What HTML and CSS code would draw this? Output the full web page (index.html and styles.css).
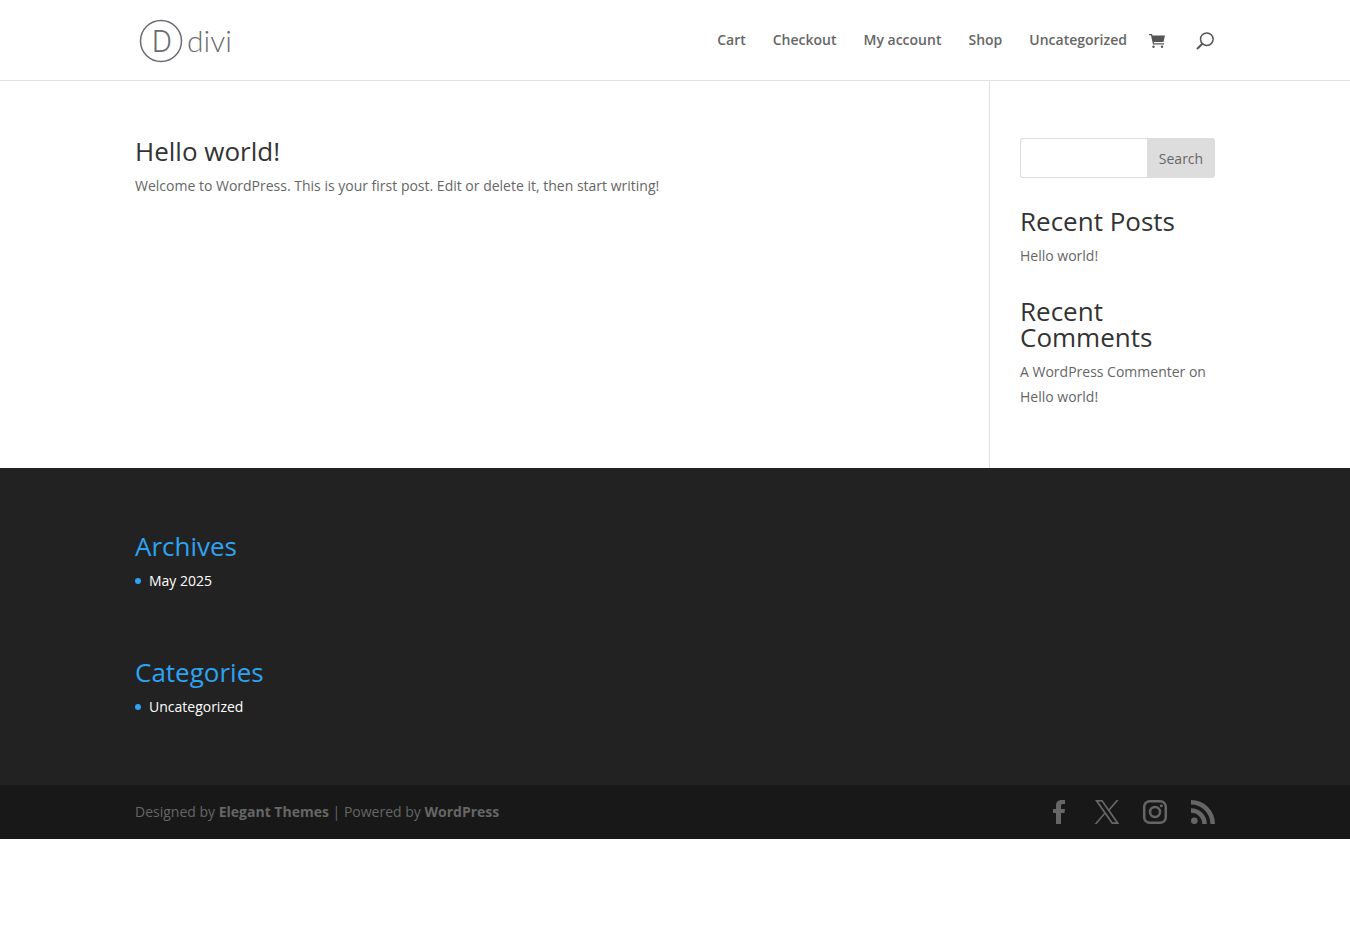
FILE: index.html
```
<!DOCTYPE html>
<html lang="en">
  <head>
    <meta charset="UTF-8" />
    <title>Hello world!</title>
    <meta name="viewport" content="width=device-width, initial-scale=1" />
    <link rel="stylesheet" href="styles.css">
  </head>
  <body>
    <header class="main-header">
      <div class="container header-inner">
        <a href="#" class="logo" aria-label="divi">
          <svg width="100" height="50" viewBox="0 0 100 50">
            <circle cx="26" cy="26" r="20.5" />
            <text class="logo-letter" x="27" y="37" text-anchor="middle">D</text>
            <text class="logo-name" x="52" y="37">divi</text>
          </svg>
        </a>
        <nav class="top-menu">
          <a href="#">Cart</a>
          <a href="#">Checkout</a>
          <a href="#">My account</a>
          <a href="#">Shop</a>
          <a href="#">Uncategorized</a>
        </nav>
        <div class="header-icons">
          <a href="#" aria-label="Cart">
            <svg width="16" height="14" viewBox="0 0 16 14">
              <path d="M0 0h3l.5 1.5H16L14.500 8H4.800l.3 1.200H15v1.300H4L2 1.200H0z" />
              <circle cx="4.500" cy="12.800" r="1.200" />
              <circle cx="13" cy="12.800" r="1.200" />
            </svg>
          </a>
          <button class="search-icon" aria-label="Open search">
            <svg width="18" height="18" viewBox="0 0 18 18">
              <circle cx="10.800" cy="7.200" r="6.300" />
              <path d="M6.300 11.700L1 17" />
            </svg>
          </button>
        </div>
      </div>
    </header>

    <main class="container content">
      <article class="post">
        <h2><a href="#">Hello world!</a></h2>
        <p>Welcome to WordPress. This is your first post. Edit or delete it, then start writing!</p>
      </article>
      <aside class="sidebar">
        <form class="search-form">
          <input type="text" aria-label="Search" />
          <button type="button">Search</button>
        </form>
        <section class="widget">
          <h2>Recent Posts</h2>
          <ul>
            <li><a href="#">Hello world!</a></li>
          </ul>
        </section>
        <section class="widget">
          <h2>Recent Comments</h2>
          <ul>
            <li><a href="#">A WordPress Commenter</a> on <a href="#">Hello world!</a></li>
          </ul>
        </section>
      </aside>
    </main>

    <footer class="main-footer">
      <div class="container footer-widgets">
        <section class="footer-widget">
          <h2>Archives</h2>
          <ul>
            <li><a href="#">May 2025</a></li>
          </ul>
        </section>
        <section class="footer-widget">
          <h2>Categories</h2>
          <ul>
            <li><a href="#">Uncategorized</a></li>
          </ul>
        </section>
      </div>
      <div class="footer-bottom">
        <div class="container footer-bottom-inner">
          <p>Designed by <a href="#">Elegant Themes</a> | Powered by <a href="#">WordPress</a></p>
          <div class="social-icons">
            <a href="#" aria-label="Facebook">
              <svg width="24" height="24" viewBox="0 0 24 24">
                <path d="M9 24V13H6V9h3V6c0-4 2-6 5.500-6H18v4h-2.500C14.300 4 14 4.700 14 6v3h4l-.5 4H14v11z" />
              </svg>
            </a>
            <a href="#" aria-label="X">
              <svg width="24" height="24" viewBox="0 0 24 24">
                <path fill-rule="evenodd" d="M0 0h7.500l6.300 9L21.500 0h2.200l-8.900 10.200L24.300 24h-7.500l-6.900-9.700L1.800 24H-.4L9 13.100zM3.300 1.700l14.400 20.600h3.300L6.700 1.700z" />
              </svg>
            </a>
            <a href="#" aria-label="Instagram">
              <svg class="outline" width="24" height="24" viewBox="0 0 24 24">
                <rect x="1.200" y="1.200" width="21.600" height="21.600" rx="5.500" />
                <circle cx="12" cy="12" r="5" />
                <circle class="dot" cx="18.300" cy="5.700" r="1.500" />
              </svg>
            </a>
            <a href="#" aria-label="RSS">
              <svg width="24" height="24" viewBox="0 0 24 24">
                <circle cx="3.300" cy="20.700" r="3.300" />
                <path d="M0 8.200v4.600A11.200 11.200 0 0 1 11.200 24h4.600A15.800 15.800 0 0 0 0 8.200z" />
                <path d="M0 0v4.600A19.400 19.400 0 0 1 19.400 24H24A24 24 0 0 0 0 0z" />
              </svg>
            </a>
          </div>
        </div>
      </div>
    </footer>
  </body>
</html>
```
FILE: styles.css
```
* {
  box-sizing: border-box;
}
body {
  margin: 0;
  font-family: "Open Sans", Arial, sans-serif;
  font-size: 14px;
  line-height: 25px;
  color: #666;
  background-color: #fff;
}
a {
  color: inherit;
  text-decoration: none;
}
h2 {
  margin: 0;
  padding-bottom: 9px;
  font-size: 26px;
  font-weight: 500;
  line-height: 26px;
  color: #333;
}
p {
  margin: 0;
}
ul {
  list-style: none;
  margin: 0;
  padding: 0;
}
svg {
  display: block;
}
.container {
  width: 80%;
  max-width: 1080px;
  margin: 0 auto;
}

/* Header */
.main-header {
  border-bottom: 1px solid #e2e2e2;
}
.header-inner {
  display: flex;
  align-items: center;
  height: 80px;
}
.logo {
  margin-right: auto;
}
.logo circle {
  fill: none;
  stroke: #6b6b70;
  stroke-width: 1.5px;
}
.logo text {
  font-weight: 300;
  fill: #6b6b70;
}
.logo-letter {
  font-family: Roboto, sans-serif;
  font-size: 31px;
}
.logo-name {
  font-family: Lato, sans-serif;
  font-size: 30px;
}
.top-menu {
  display: flex;
  gap: 27px;
  padding-bottom: 2px;
  font-weight: 600;
}
.header-icons {
  display: flex;
  align-items: center;
  gap: 31px;
  padding: 2px 1px 0 22px;
}
.header-icons svg {
  fill: #555;
}
.search-icon {
  padding: 0;
  border: 0;
  background: none;
  cursor: pointer;
}
.search-icon svg {
  fill: none;
  stroke: #555;
  stroke-width: 1.5px;
}
.search-icon path {
  stroke-width: 2px;
}

/* Content */
.content {
  display: flex;
}
.post {
  flex: 1;
  padding-top: 57px;
}
.sidebar {
  width: 226px;
  padding: 57px 0 59px 30px;
  border-left: 1px solid #e2e2e2;
}
.search-form {
  display: flex;
  height: 40px;
  margin-bottom: 30px;
}
.search-form input {
  flex: 1;
  min-width: 0;
  padding: 0 10px;
  font: inherit;
  border: 1px solid #ddd;
  border-right: 0;
  border-radius: 3px 0 0 3px;
}
.search-form button {
  width: 68px;
  padding: 0;
  font: inherit;
  color: #666;
  background-color: #ddd;
  border: 0;
  border-radius: 0 3px 3px 0;
}
.widget + .widget {
  margin-top: 30px;
}

/* Footer */
.main-footer {
  background-color: #222;
}
.footer-widgets {
  padding: 65px 0 66px;
}
.footer-widget + .footer-widget {
  margin-top: 66px;
}
.footer-widget h2 {
  color: #2ea3f2;
}
.footer-widget li {
  display: flex;
  align-items: center;
  gap: 8px;
  color: #fff;
}
.footer-widget li::before {
  content: "";
  width: 6px;
  height: 6px;
  border-radius: 3px;
  background-color: #2ea3f2;
}
.footer-bottom {
  padding: 14px 0 15px;
  background-color: #181818;
}
.footer-bottom-inner {
  display: flex;
  justify-content: space-between;
  align-items: center;
}
.footer-bottom p {
  color: #666;
}
.footer-bottom p a {
  font-weight: 700;
}
.social-icons {
  display: flex;
  gap: 24px;
}
.social-icons svg {
  overflow: visible;
  fill: #666;
}
.social-icons .outline {
  fill: none;
  stroke: #666;
  stroke-width: 2.5px;
}
.social-icons .dot {
  fill: #666;
  stroke: none;
}
```
